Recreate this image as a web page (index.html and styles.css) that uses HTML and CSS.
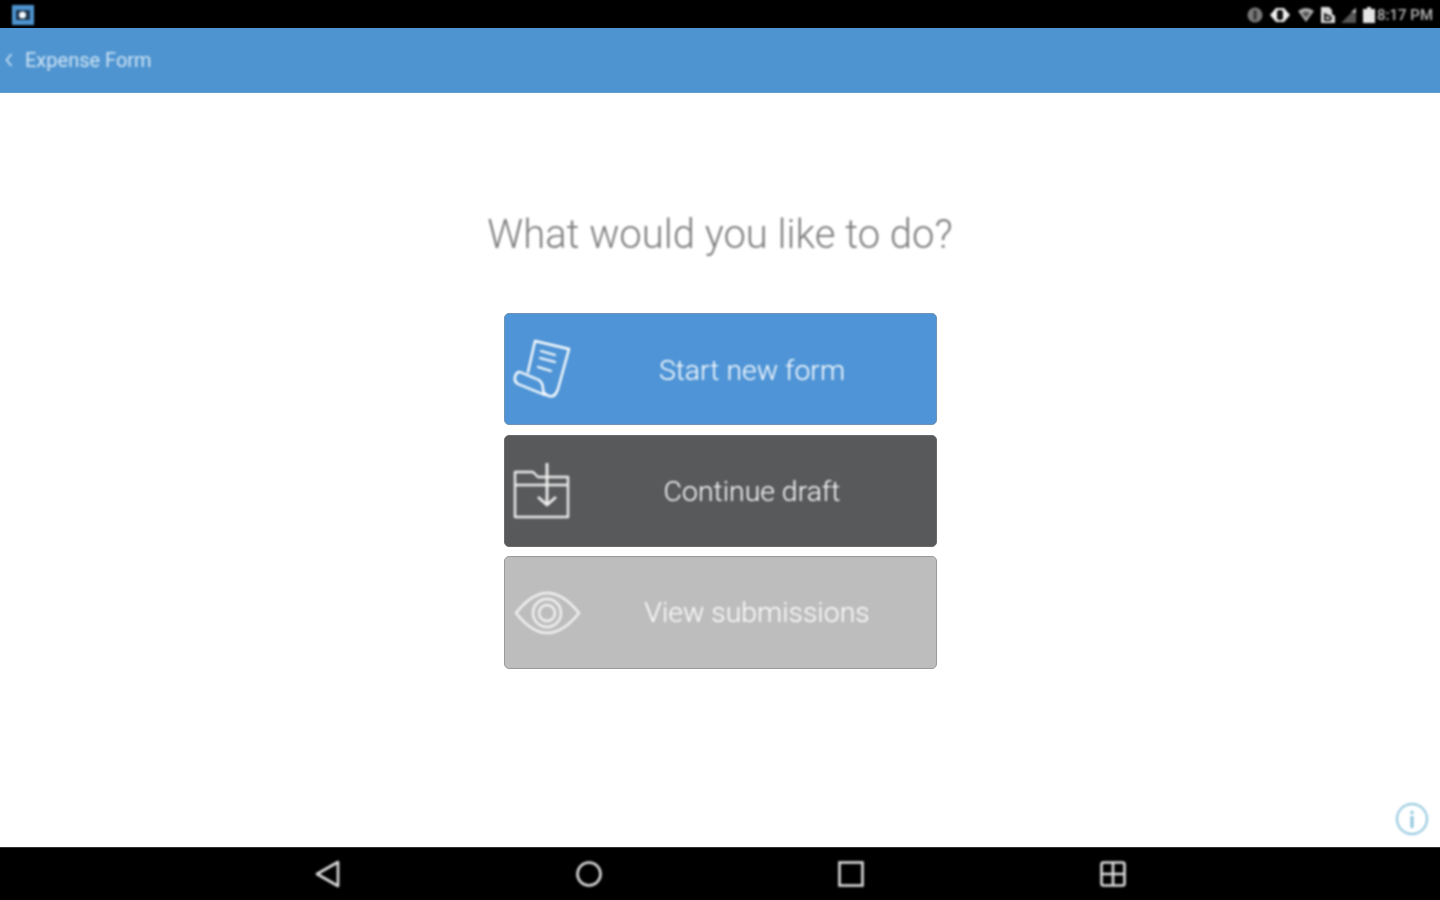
FILE: index.html
```html
<!DOCTYPE html>
<html lang="en">
<head>
    <meta charset="UTF-8">
    <title>Expense Form</title>
    <link rel="stylesheet" href="styles.css">
</head>
<body>
    <div class="status-bar">
        <svg class="app-badge" width="24" height="22" viewBox="0 0 24 22">
            <rect x="1" y="1" width="22" height="20" fill="#4e94d0"/>
            <rect x="5" y="6" width="14" height="10" fill="#1c3550"/>
            <circle cx="11.5" cy="11" r="3.5" fill="#f4f8fb"/>
        </svg>
        <div class="status-icons">
            <svg width="16" height="18" viewBox="0 0 16 18">
                <circle cx="8" cy="9" r="7.5" fill="#7a7a7a"/>
                <rect x="6.5" y="4" width="3" height="10" rx="1.5" fill="#333"/>
            </svg>
            <svg width="22" height="20" viewBox="0 0 22 20">
                <path d="M7 3h8l6 7-6 7H7l-6-7z" fill="#eee"/>
                <rect x="8" y="5" width="6" height="10" rx="2" fill="#111"/>
            </svg>
            <svg width="18" height="16" viewBox="0 0 18 16">
                <path d="M1 4Q9-2 17 4L9 15z" fill="#aaa"/>
                <path d="M5 6Q9 3 13 6L9 11z" fill="#555"/>
            </svg>
            <svg width="14" height="16" viewBox="0 0 14 16">
                <path d="M0 0h8l3 3v4l3 2v7H0z" fill="#ddd"/>
                <path d="M4 6v7h5l1-2-2-2-4-1" fill="none" stroke="#222" stroke-width="2"/>
            </svg>
            <svg width="16" height="16" viewBox="0 0 16 16">
                <path d="M15 1v15H0z" fill="#555"/>
                <path d="M15 1v5l-5-1z" fill="#bbb"/>
            </svg>
            <div class="clock-wrap">
                <svg width="12" height="16" viewBox="0 0 12 16">
                    <path d="M4 0h4v2h4v14H0V2h4z" fill="#e4e4e4"/>
                </svg>
                <span class="clock">8:17 PM</span>
            </div>
        </div>
    </div>

    <header class="app-bar">
        <svg width="8" height="14" viewBox="0 0 8 14">
            <path d="M6.5 1 1.5 7l5 6" fill="none" stroke="#cfe4f5" stroke-width="1.6"/>
        </svg>
        <span class="app-title">Expense Form</span>
    </header>

    <main class="content">
        <h1 class="question">What would you like to do?</h1>

        <div class="actions">
            <a class="action action-new">
                <svg class="action-icon" width="64" height="70" viewBox="0 0 64 70">
                    <g fill="none" stroke="#fff" stroke-width="2.4" stroke-linejoin="round" stroke-linecap="round">
                        <path d="M23 38 30 7 64 15 53 55Q50 64 44 62 38 60 38 55 38 49 34 46L15 38Q11 38 10 43 9 48 13 50L40 61"/>
                        <path d="M36 17 50 21M35 24 50 28M33 33 46 37" stroke-width="2.2"/>
                    </g>
                </svg>
                <span class="action-label">Start new form</span>
            </a>
            <a class="action action-draft">
                <svg class="action-icon" width="64" height="70" viewBox="0 0 64 70">
                    <g fill="none" stroke="#eee" stroke-width="2.4" stroke-linejoin="round">
                        <path d="M10 16H28L33 21H63V61H10ZM10 29H63"/>
                        <path d="M42 7V49M33 41 42 49 51 41" stroke-width="2.8"/>
                    </g>
                </svg>
                <span class="action-label">Continue draft</span>
            </a>
            <a class="action action-view">
                <svg class="action-icon" width="64" height="70" viewBox="0 0 64 70">
                    <g fill="none" stroke="#f2f2f2" stroke-width="2.4">
                        <path d="M11 35Q27 15 42 15 58 15 74 35 58 55 42 55 27 55 11 35Z"/>
                        <circle cx="42" cy="35" r="14"/>
                        <circle cx="42" cy="35" r="8"/>
                    </g>
                </svg>
                <span class="action-label">View submissions</span>
            </a>
        </div>

        <svg class="info-button" width="34" height="34" viewBox="0 0 34 34">
            <circle cx="17" cy="17" r="15" fill="none" stroke="#8cc4dc" stroke-width="2"/>
            <rect x="15.5" y="9" width="3" height="3" fill="#8cc4dc"/>
            <rect x="15.5" y="14" width="3" height="12" fill="#8cc4dc"/>
        </svg>
    </main>

    <nav class="nav-bar">
        <svg width="26" height="28" viewBox="0 0 26 28">
            <path d="M23 2V26L2 14Z" fill="none" stroke="#ddd" stroke-width="2.6" stroke-linejoin="round"/>
        </svg>
        <svg width="28" height="28" viewBox="0 0 28 28">
            <circle cx="14" cy="14" r="11.5" fill="none" stroke="#ddd" stroke-width="2.6"/>
        </svg>
        <svg width="28" height="28" viewBox="0 0 28 28">
            <rect x="2.5" y="2.5" width="23" height="23" fill="none" stroke="#ddd" stroke-width="2.6"/>
        </svg>
        <svg width="28" height="28" viewBox="0 0 28 28">
            <rect x="2.5" y="2.5" width="23" height="23" rx="2" fill="none" stroke="#ddd" stroke-width="2.6"/>
            <path d="M14 2.5v23M2.5 14h23" stroke="#ddd" stroke-width="2.6"/>
        </svg>
    </nav>
</body>
</html>
```

FILE: styles.css
```css
html, body {
    height: 100%;
    margin: 0;
    padding: 0;
}
body {
    display: flex;
    flex-direction: column;
    height: 900px;
    overflow: hidden;
    background: #fff;
    font-family: Roboto, "Liberation Sans", sans-serif;
}
/* the source is a soft, upscaled capture */
.status-bar > *, .app-bar > *, .nav-bar > *, .question, .action > *, .info-button {
    filter: blur(0.8px);
}
svg {
    display: block;
    flex: none;
}

/* status bar */
.status-bar {
    height: 28px;
    background: #000;
    display: flex;
    align-items: center;
    justify-content: space-between;
    padding: 1px 7px 0 11px;
    box-sizing: border-box;
}
.status-icons {
    display: flex;
    align-items: center;
    gap: 6px;
}
.clock-wrap {
    display: flex;
    align-items: center;
    gap: 2px;
}
.clock {
    color: #b5b5b5;
    font-size: 15px;
    font-weight: 500;
}

/* app bar */
.app-bar {
    height: 65px;
    box-sizing: border-box;
    background: #4e94d0;
    display: flex;
    align-items: center;
    gap: 12px;
    padding-left: 5px;
    border-bottom: 1px solid #5f9dd2;
}
.app-title {
    color: #cfe4f5;
    font-size: 20px;
}

/* main */
.content {
    flex: 1;
    position: relative;
    display: flex;
    flex-direction: column;
    align-items: center;
}
.question {
    margin: 115px 0 51px;
    color: #7d7d7d;
    font-size: 40px;
    font-weight: 300;
    line-height: 54px;
}
.actions {
    width: 433px;
    display: flex;
    flex-direction: column;
    gap: 10px;
}
.action {
    height: 112px;
    box-sizing: border-box;
    border-radius: 5px;
    display: flex;
    align-items: center;
}
.action-icon {
    overflow: visible;
}
.action-label {
    flex: 1;
    text-align: center;
    color: #fff;
    font-size: 28.4px;
    font-weight: 300;
}
.action-new {
    background: #4e94d6;
    border: 1px solid #6f93b4;
}
.action-new .action-label {
    padding-top: 2px;
}
.action-draft {
    background: #58595b;
    border: 1px solid #6a6a6a;
}
.action-view {
    height: 113px;
    margin-top: -1px;
    background: #bdbdbd;
    border: 1px solid #9a9a9a;
}
.action-view .action-label {
    padding-left: 10px;
}
.info-button {
    position: absolute;
    right: 11px;
    bottom: 11px;
}

/* nav bar */
.nav-bar {
    height: 53px;
    box-sizing: border-box;
    background: #000;
    border-top: 1px solid #333;
    display: flex;
    align-items: center;
    justify-content: center;
    gap: 234px;
    padding-left: 2px;
}
```
